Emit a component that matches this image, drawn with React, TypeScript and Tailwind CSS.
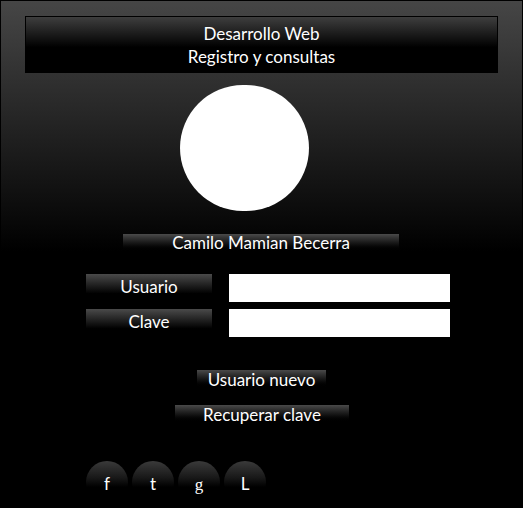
const font = { fontFamily: "Lato, 'Open Sans', sans-serif" }

const Bar = ({ text, className }: { text: string; className: string }) => (
  <div className={`bg-gradient-to-b from-[#4a4a4a] to-[#000] text-white text-[17px] text-center ${className}`}>
    {text}
  </div>
)

const Social = ({ letter, serif }: { letter: string; serif?: boolean }) => (
  <div className="w-[42px] h-[42px] rounded-full bg-[linear-gradient(to_bottom,#3a3a3a_0%,#181818_40%,#000_62%)] flex items-center justify-center text-white text-[17px] leading-none">
    <span className={serif ? "font-['Liberation_Serif'] pt-[4px]" : "pt-[2px]"}>{letter}</span>
  </div>
)

const App = () => {
  return (
    <div style={font} className="w-[523px] h-[508px] border border-black bg-[linear-gradient(to_bottom,#464646_0px,#000_250px)] flex flex-col">
      <div className="mx-[24px] mt-[15px] h-[57px] border border-black bg-[linear-gradient(to_bottom,#3e3e3e_0%,#000_55%)] flex flex-col items-center justify-center text-white text-[17px] leading-[23px]">
        <span>Desarrollo Web</span>
        <span>Registro y consultas</span>
      </div>

      <div className="mt-[12px] ml-[179px] w-[129px] h-[126px] rounded-full bg-white"></div>

      <Bar text="Camilo Mamian Becerra" className="mt-[23px] ml-[122px] w-[276px] h-[18px] leading-[18px]" />

      <div className="mt-[22px] ml-[85px] flex flex-col gap-[7px]">
        <div className="flex gap-[17px]">
          <Bar text="Usuario" className="w-[126px] h-[28px] leading-[26px] bg-[linear-gradient(to_bottom,#4a4a4a_0%,#000_70%)]" />
          <div className="w-[221px] h-[28px] bg-white"></div>
        </div>
        <div className="flex gap-[17px]">
          <Bar text="Clave" className="w-[126px] h-[28px] leading-[26px] bg-[linear-gradient(to_bottom,#4a4a4a_0%,#000_70%)]" />
          <div className="w-[221px] h-[28px] bg-white"></div>
        </div>
      </div>

      <Bar text="Usuario nuevo" className="mt-[33px] ml-[196px] w-[129px] h-[18px] leading-[20px]" />
      <Bar text="Recuperar clave" className="mt-[17px] ml-[174px] w-[174px] h-[18px] leading-[20px]" />

      <div className="mt-[38px] ml-[85px] flex gap-[4px]">
        <Social letter="f" />
        <Social letter="t" />
        <Social letter="g" serif />
        <Social letter="L" />
      </div>
    </div>
  )
}

export default App
